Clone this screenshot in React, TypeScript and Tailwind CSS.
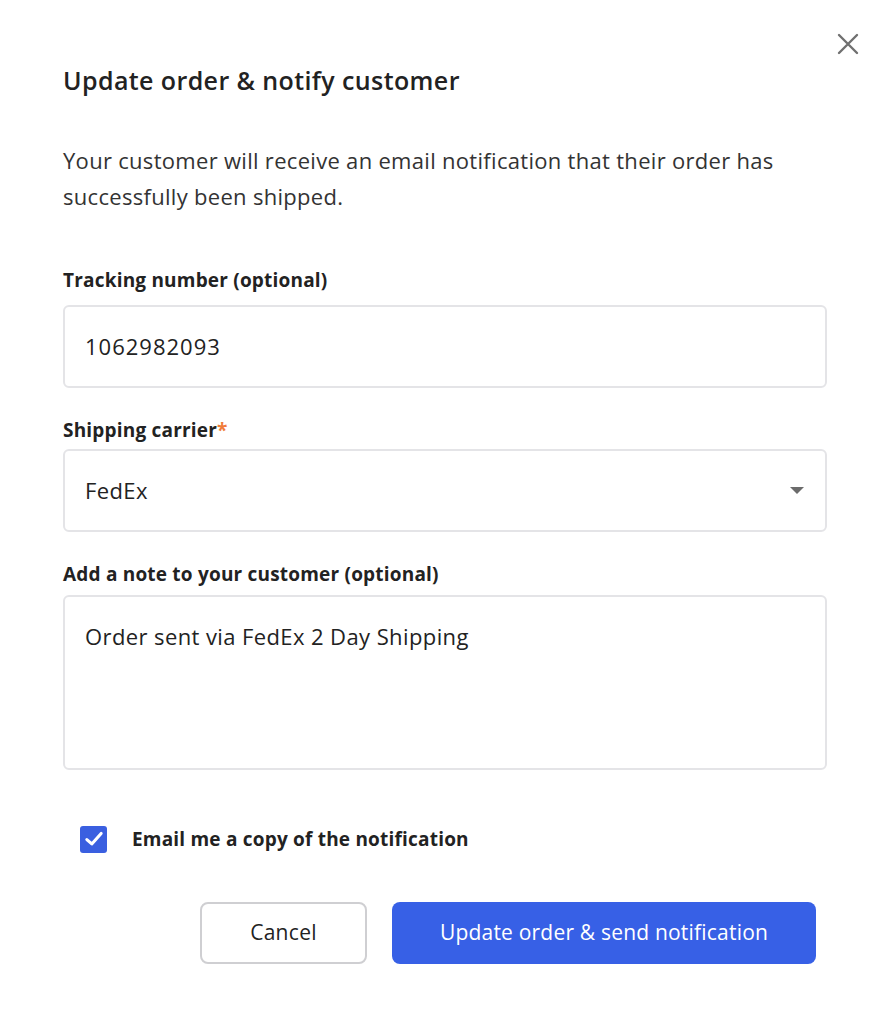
export default function App() {
  return (
    <div className="min-h-screen w-[890px] bg-white text-[#222] font-['Open_Sans','Lato',sans-serif]">
      <div className="relative px-[63px] pt-[62px]">
        {/* Close */}
        <button className="absolute right-[30px] top-[32px] text-[#707070]">
          <svg width="24" height="24" viewBox="0 0 24 24" fill="none" stroke="currentColor" strokeWidth="2.4" strokeLinecap="round">
            <path d="M3 3 L21 21 M21 3 L3 21" />
          </svg>
        </button>

        <h1 className="text-[25px] leading-[36px] font-semibold tracking-[0.4px] text-[#222]">Update order &amp; notify customer</h1>

        <p className="mt-[44px] text-[22px] leading-[36px] tracking-[0.3px] text-[#333]">
          Your customer will receive an email notification that their order has successfully been shipped.
        </p>

        {/* Tracking */}
        <label className="block mt-[53px] text-[19px] leading-[26px] font-bold tracking-[0.2px]">Tracking number (optional)</label>
        <div className="mt-[12px] h-[83px] rounded-[6px] border-2 border-[#e4e4e7] flex items-center px-[20px] text-[22px] tracking-[1px] text-[#222]">
          1062982093
        </div>

        {/* Carrier */}
        <label className="block mt-[29px] text-[19px] leading-[26px] font-bold tracking-[0.2px]">
          Shipping carrier<span className="text-[#f07c3a]">*</span>
        </label>
        <div className="mt-[6px] h-[83px] rounded-[6px] border-2 border-[#e4e4e7] flex items-center justify-between pl-[20px] pr-[20px] text-[22px] tracking-[0.4px] text-[#222]">
          <span>FedEx</span>
          <svg width="16" height="9" viewBox="0 0 16 9">
            <path d="M1 1 L15 1 L8 8 Z" fill="#6b6b6b" />
          </svg>
        </div>

        {/* Note */}
        <label className="block mt-[29px] text-[19px] leading-[26px] font-bold tracking-[0.2px]">Add a note to your customer (optional)</label>
        <div className="mt-[8px] h-[175px] rounded-[6px] border-2 border-[#e4e4e7] px-[20px] pt-[24px] text-[22px] leading-[30px] tracking-[0.4px] text-[#222]">
          Order sent via FedEx 2 Day Shipping
        </div>

        {/* Checkbox */}
        <div className="mt-[55px] ml-[17px] flex items-center gap-[25px]">
          <span className="w-[27px] h-[27px] rounded-[3px] bg-[#3a5fe0] flex items-center justify-center">
            <svg width="22" height="22" viewBox="0 0 20 20" fill="none" stroke="white" strokeWidth="2.8" strokeLinecap="round" strokeLinejoin="round">
              <path d="M3.5 10.5 L8 14.5 L16.5 5" />
            </svg>
          </span>
          <span className="text-[19px] font-bold tracking-[0.2px]">Email me a copy of the notification</span>
        </div>

        {/* Buttons */}
        <div className="mt-[48px] flex justify-end gap-[25px] pr-[11px]">
          <button className="w-[167px] h-[62px] rounded-[8px] border-2 border-[#cfcfd2] text-[21px] tracking-[0.3px] text-[#222] bg-white">
            Cancel
          </button>
          <button className="w-[424px] h-[62px] rounded-[8px] bg-[#3760e6] text-[21px] tracking-[0.2px] text-white">
            Update order &amp; send notification
          </button>
        </div>
      </div>
    </div>
  );
}
